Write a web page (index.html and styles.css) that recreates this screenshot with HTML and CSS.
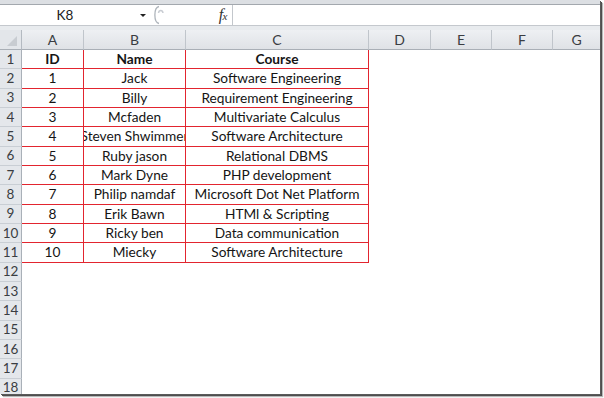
FILE: index.html
```html
<!DOCTYPE html>
<html>
<head>
<meta charset="utf-8">
<link rel="stylesheet" href="styles.css">
</head>
<body>
<div class="window">
  <div class="ribbon-edge"></div>
  <div class="formula-bar">
    <div class="name-box"><span class="name-text">K8</span><span class="dd-arrow"></span></div>
    <div class="grip">
      <svg width="18" height="20" viewBox="0 0 18 20">
        <path d="M9 1.5 C3.5 2.5 3.5 17.5 9 18.5" fill="none" stroke="#aeb4bb" stroke-width="1.3"/>
        <path d="M8.5 8 C9 4.5 12.5 4.5 13 8" fill="none" stroke="#c9cdd3" stroke-width="1.5"/>
      </svg>
    </div>
    <div class="fx-area"><span class="fx">f<span class="fx-x">x</span></span></div>
    <div class="formula-input"></div>
  </div>
  <div class="bar-gap"></div>
  <div class="sheet">
    <div class="corner"></div><div class="ch">A</div><div class="ch">B</div><div class="ch">C</div><div class="ch">D</div><div class="ch">E</div><div class="ch">F</div><div class="ch last">G</div>

    <div class="rh">1</div><div class="c t b">ID</div><div class="c t b">Name</div><div class="c t b">Course</div><div class="c"></div><div class="c"></div><div class="c"></div><div class="c"></div>
    <div class="rh">2</div><div class="c t">1</div><div class="c t">Jack</div><div class="c t">Software Engineering</div><div class="c"></div><div class="c"></div><div class="c"></div><div class="c"></div>
    <div class="rh">3</div><div class="c t">2</div><div class="c t">Billy</div><div class="c t">Requirement Engineering</div><div class="c"></div><div class="c"></div><div class="c"></div><div class="c"></div>
    <div class="rh">4</div><div class="c t">3</div><div class="c t">Mcfaden</div><div class="c t">Multivariate Calculus</div><div class="c"></div><div class="c"></div><div class="c"></div><div class="c"></div>
    <div class="rh">5</div><div class="c t">4</div><div class="c t">Steven Shwimmer</div><div class="c t">Software Architecture</div><div class="c"></div><div class="c"></div><div class="c"></div><div class="c"></div>
    <div class="rh">6</div><div class="c t">5</div><div class="c t">Ruby jason</div><div class="c t">Relational DBMS</div><div class="c"></div><div class="c"></div><div class="c"></div><div class="c"></div>
    <div class="rh">7</div><div class="c t">6</div><div class="c t">Mark Dyne</div><div class="c t">PHP development</div><div class="c"></div><div class="c"></div><div class="c"></div><div class="c"></div>
    <div class="rh">8</div><div class="c t">7</div><div class="c t">Philip namdaf</div><div class="c t">Microsoft Dot Net Platform</div><div class="c"></div><div class="c"></div><div class="c"></div><div class="c"></div>
    <div class="rh">9</div><div class="c t">8</div><div class="c t">Erik Bawn</div><div class="c t">HTMl &amp; Scripting</div><div class="c"></div><div class="c"></div><div class="c"></div><div class="c"></div>
    <div class="rh">10</div><div class="c t">9</div><div class="c t">Ricky ben</div><div class="c t">Data communication</div><div class="c"></div><div class="c"></div><div class="c"></div><div class="c"></div>
    <div class="rh">11</div><div class="c t">10</div><div class="c t">Miecky</div><div class="c t">Software Architecture</div><div class="c"></div><div class="c"></div><div class="c"></div><div class="c"></div>
    <div class="rh">12</div><div class="c"></div><div class="c"></div><div class="c"></div><div class="c"></div><div class="c"></div><div class="c"></div><div class="c"></div>
    <div class="rh">13</div><div class="c"></div><div class="c"></div><div class="c"></div><div class="c"></div><div class="c"></div><div class="c"></div><div class="c"></div>
    <div class="rh">14</div><div class="c"></div><div class="c"></div><div class="c"></div><div class="c"></div><div class="c"></div><div class="c"></div><div class="c"></div>
    <div class="rh">15</div><div class="c"></div><div class="c"></div><div class="c"></div><div class="c"></div><div class="c"></div><div class="c"></div><div class="c"></div>
    <div class="rh">16</div><div class="c"></div><div class="c"></div><div class="c"></div><div class="c"></div><div class="c"></div><div class="c"></div><div class="c"></div>
    <div class="rh">17</div><div class="c"></div><div class="c"></div><div class="c"></div><div class="c"></div><div class="c"></div><div class="c"></div><div class="c"></div>
    <div class="rh">18</div><div class="c"></div><div class="c"></div><div class="c"></div><div class="c"></div><div class="c"></div><div class="c"></div><div class="c"></div>
  </div>
</div>
</body>
</html>
```

FILE: styles.css
```css
html, body {
  margin: 0;
  padding: 0;
  background: #ffffff;
}

body {
  width: 604px;
  height: 398px;
  overflow: hidden;
  font-family: Lato, "Liberation Sans", sans-serif;
}

.window {
  width: 600px;
  height: 394px;
  overflow: hidden;
  background: #ffffff;
  box-shadow: 1px 1px 0 #5a5a5a, 2px 2px 0 #4e4e4e, 3px 3px 1px #b8b8b8;
  display: flex;
  flex-direction: column;
}

.ribbon-edge {
  height: 4px;
  flex: 0 0 4px;
  background: #dcdfe3;
  border-bottom: 1px solid #a3a8ae;
}

.formula-bar {
  height: 20px;
  flex: 0 0 20px;
  display: flex;
  background: #ffffff;
}

.name-box {
  width: 150px;
  display: flex;
  align-items: center;
}

.name-text {
  width: 130px;
  text-align: center;
  font-size: 13.5px;
  color: #222;
}

.dd-arrow {
  margin-left: 10px;
  width: 0;
  height: 0;
  border-left: 3.5px solid transparent;
  border-right: 3.5px solid transparent;
  border-top: 3.5px solid #222;
}

.grip {
  width: 20px;
  display: flex;
  align-items: center;
}

.fx-area {
  width: 57px;
  display: flex;
  align-items: center;
  justify-content: flex-end;
  padding-right: 5px;
  border-right: 1px solid #c3c7cc;
}

.fx {
  font-family: "Liberation Serif", serif;
  font-style: italic;
  font-size: 16px;
  color: #333;
  letter-spacing: -0.5px;
}

.fx-x {
  font-size: 11px;
}

.formula-input {
  flex: 1;
}

.bar-gap {
  height: 4px;
  flex: 0 0 4px;
  background: #e8ebee;
  border-top: 1px solid #c4c8cd;
}

.sheet {
  display: grid;
  grid-template-columns: 22px 62px 102px 183px 62px 61px 61px 47px;
  grid-template-rows: 20px;
  grid-auto-rows: 19.33px;
}

.corner {
  box-sizing: border-box;
  background: #e3e6ea;
  border-right: 1px solid #b4bac1;
  border-bottom: 1px solid #a9afb6;
  position: relative;
}

.corner::after {
  content: "";
  position: absolute;
  right: 4px;
  bottom: 3px;
  width: 0;
  height: 0;
  border-left: 10px solid transparent;
  border-bottom: 10px solid #c8ccd1;
}

.ch {
  box-sizing: border-box;
  background: linear-gradient(#eef0f3, #dfe2e6);
  border-right: 1px solid #c0c5cb;
  border-bottom: 1px solid #a9afb6;
  display: flex;
  align-items: center;
  justify-content: center;
  font-size: 14px;
  color: #3a3d42;
}

.ch.last {
  border-right: none;
}

.rh {
  box-sizing: border-box;
  background: #e4e7eb;
  border-right: 1px solid #a9b0b8;
  border-bottom: 1px solid #c9ced4;
  display: flex;
  align-items: center;
  justify-content: center;
  font-size: 13.5px;
  color: #3a3d42;
  padding-bottom: 1px;
}

.c {
  box-sizing: border-box;
  display: flex;
  align-items: center;
  justify-content: center;
  overflow: hidden;
  white-space: nowrap;
  font-size: 13.7px;
  color: #151515;
  padding-bottom: 1px;
}

.t {
  border-right: 1px solid #e2252f;
  border-bottom: 1px solid #e2252f;
}

.b {
  font-weight: bold;
}
```
